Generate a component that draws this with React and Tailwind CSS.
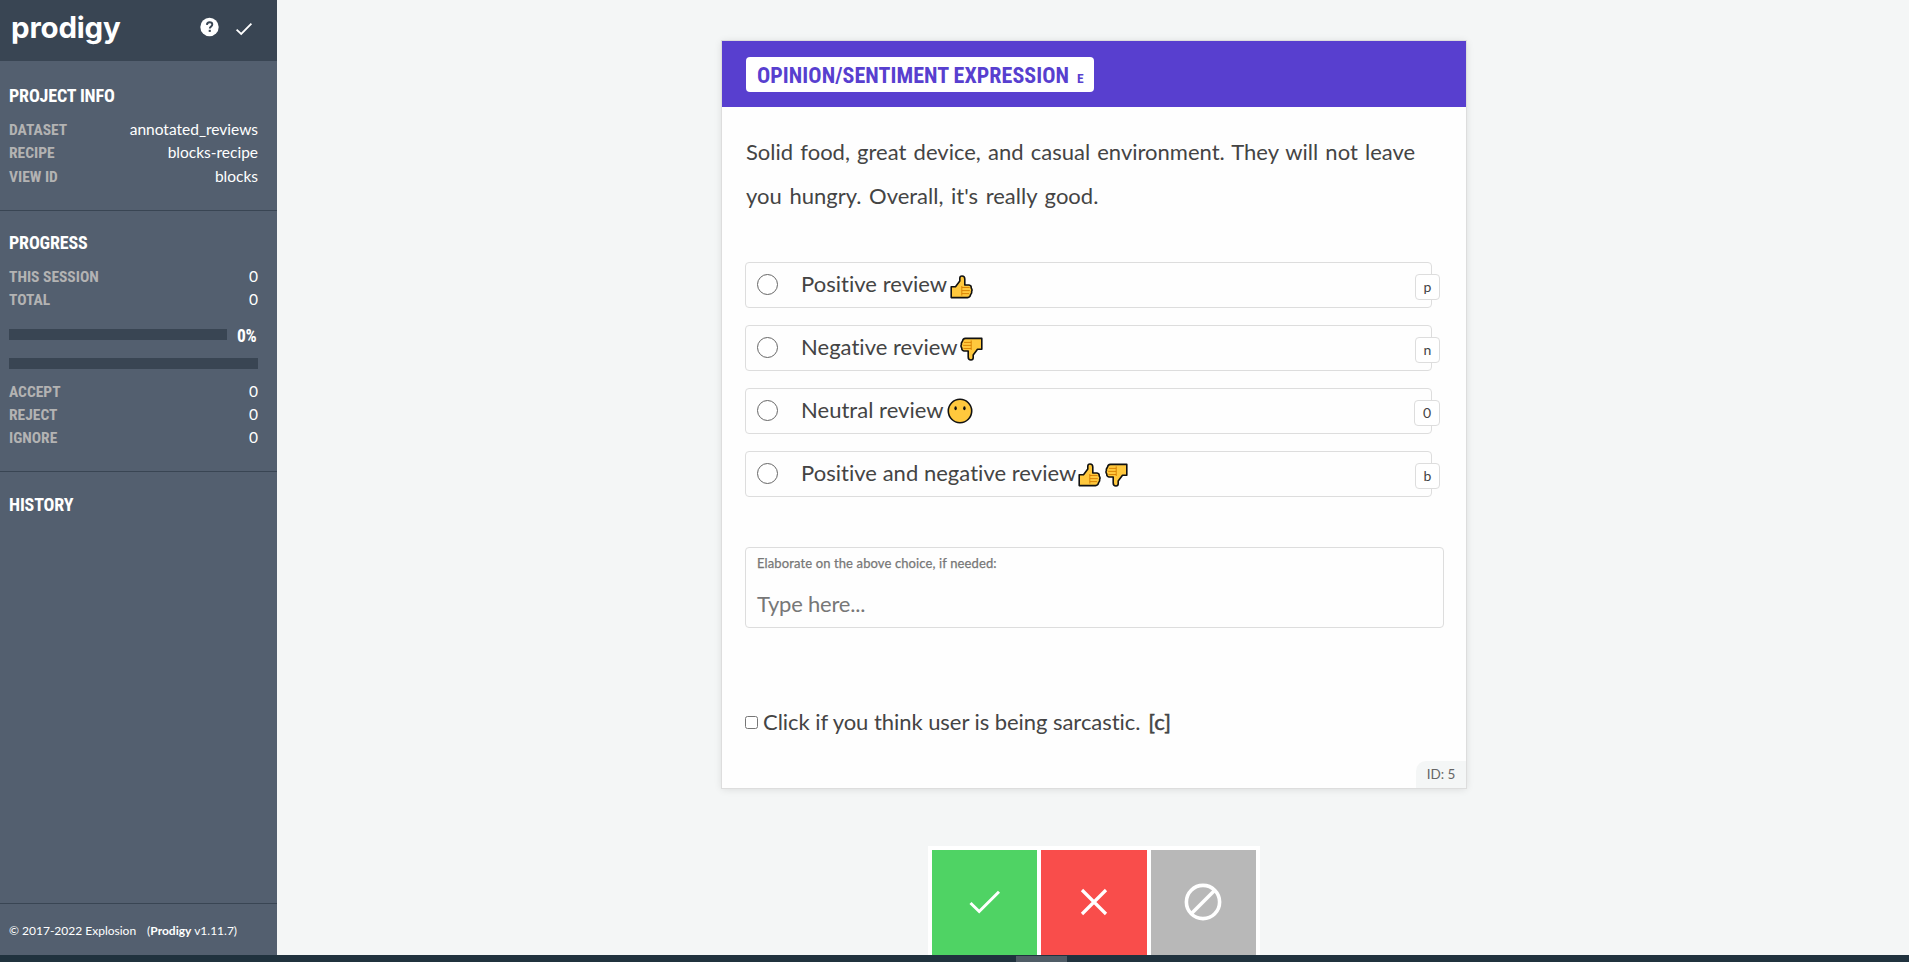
import React from 'react';

const COND = 'font-[Roboto,sans-serif] font-bold [font-stretch:75%]';

function Heading({ children }) {
  return <h2 className={`${COND} text-[18px] leading-[20px] tracking-[-0.15px] text-white`}>{children}</h2>;
}

function Row({ label, value }) {
  return (
    <div className="flex h-[23px] items-center justify-between">
      <span className={`${COND} pt-[2px] text-[15.5px] leading-[23px] text-[#b3b3b3]`}>{label}</span>
      <span className="text-[15.5px] leading-[23px] text-white">{value}</span>
    </div>
  );
}

function ThumbUp({ className = '' }) {
  return (
    <svg viewBox="0 0 23 24" className={`h-6 w-[23px] ${className}`}>
      <path d="M1.2 11.7H5.5L9.8 6V3.2Q9.8 1 12 1Q14.8 1 14.8 4V10H19Q21.5 10.5 21.2 13Q22.6 14.5 21.6 16.5Q22 18.5 20.6 19.5Q20.2 22.6 17.5 22.6H1.2Z" fill="#ffc83d" stroke="#111" strokeWidth="1.6" strokeLinejoin="round" />
      <path d="M11.8 11V20.6M11.8 12.5H19.6M11.8 15.6H19.8M11.8 18.6H19" fill="none" stroke="#d67d00" strokeWidth="0.9" />
    </svg>
  );
}

function ThumbDown({ className = '' }) {
  return <ThumbUp className={`rotate-180 ${className}`} />;
}

function Neutral() {
  return (
    <svg viewBox="0 0 26 26" className="ml-[3px] size-[26px]">
      <circle cx="13" cy="13" r="11.7" fill="#ffc83d" stroke="#111" strokeWidth="1.6" />
      <ellipse cx="8.6" cy="10.3" rx="1.2" ry="2" fill="#111" />
      <ellipse cx="17.4" cy="10.3" rx="1.2" ry="2" fill="#111" />
    </svg>
  );
}

function Option({ label, hotkey, wide, children }) {
  return (
    <div className="relative flex h-[46px] w-[687px] items-center rounded-[4px] border border-[#ddd] pb-px pl-[11px]">
      <span className="size-[21px] rounded-full border border-[#666] bg-white" />
      <span className="ml-[23px] flex items-center text-[22px] leading-[42px] text-[#444]">
        <span className="pb-px tracking-[0.03px]">{label}</span>
        {children}
      </span>
      <kbd className={`absolute -right-[9px] top-[11px] flex h-[26px] items-center justify-center rounded-[4px] border border-[#ddd] bg-white pb-[2px] font-[Lato,sans-serif] text-[14px] text-[#444] ${wide ? 'w-[26px]' : 'w-[25px]'}`}>
        {hotkey}
      </kbd>
    </div>
  );
}

function Sidebar() {
  return (
    <aside className="flex w-[277px] shrink-0 flex-col bg-[#535f6f]">
      <header className="flex h-[61px] items-start bg-[#394553]">
        <div className="ml-[11px] mt-[7px] w-[189px] font-[Inter,sans-serif] text-[29.5px] font-bold leading-[40px] tracking-[-0.2px] text-white">prodigy</div>
        <svg viewBox="0 0 20 20" className="mt-[17px] size-5">
          <circle cx="9.5" cy="10" r="9.2" fill="#fff" />
          <path d="M6.9 7.9Q7 5.3 9.6 5.3Q12.3 5.3 12.3 7.6Q12.3 8.7 11 9.6Q9.8 10.4 9.8 11.5" fill="none" stroke="#394553" strokeWidth="1.9" />
          <rect x="8.7" y="12.8" width="2.1" height="2.1" fill="#394553" />
        </svg>
        <svg viewBox="0 0 18 14" className="ml-[15px] mt-[22px] h-[14px] w-[18px]">
          <path d="M1.6 7.6L6.2 12L16.4 1.6" fill="none" stroke="#fff" strokeWidth="1.8" />
        </svg>
      </header>
      <section className="h-[150px] border-b border-[#394553] pl-[9px] pr-[19px] pt-[25px]">
        <Heading>PROJECT INFO</Heading>
        <div className="mt-[12px]">
          <Row label="DATASET" value="annotated_reviews" />
          <Row label="RECIPE" value="blocks-recipe" />
          <div className="h-px" />
          <Row label="VIEW ID" value="blocks" />
        </div>
      </section>
      <section className="h-[261px] border-b border-[#394553] pl-[9px] pr-[19px] pt-[22px]">
        <Heading>PROGRESS</Heading>
        <div className="mt-[12px]">
          <Row label="THIS SESSION" value="0" />
          <Row label="TOTAL" value="0" />
        </div>
        <div className="mt-[18px] flex h-[11px] items-center">
          <div className="h-[11px] w-[218px] bg-[#394553]" />
          <span className={`${COND} ml-[10px] mt-[2px] text-[17.5px] leading-[20px] tracking-[-0.3px] text-white`}>0%</span>
        </div>
        <div className="mt-[18px] h-[11px] bg-[#394553]" />
        <div className="mt-[11px]">
          <Row label="ACCEPT" value="0" />
          <Row label="REJECT" value="0" />
          <Row label="IGNORE" value="0" />
        </div>
      </section>
      <section className="grow pl-[9px] pt-[23px]">
        <Heading>HISTORY</Heading>
      </section>
      <footer className="flex h-[52px] items-center gap-[11px] border-t border-[#394553] pl-[9px] pt-[3px] text-[12px] text-white">
        <span>© 2017-2022 Explosion</span>
        <span>(<b>Prodigy</b> v1.11.7)</span>
      </footer>
    </aside>
  );
}

function Card() {
  return (
    <article className="flex h-[747px] w-[744px] flex-col bg-[#fefefe] shadow-[0_0_0_1px_#ddd,0_1px_8px_rgba(0,0,0,0.12)]">
      <header className="h-[66px] bg-[#583fcf] pl-6 pt-4">
        <div className={`${COND} flex h-[35px] w-[348px] items-baseline rounded-[4px] bg-white pl-[11px] text-[#583fcf]`}>
          <span className="text-[22px] leading-[37px] tracking-[0.04px]">OPINION/SENTIMENT EXPRESSION</span>
          <span className="ml-[8px] text-[13.5px]">E</span>
        </div>
      </header>
      <p className="mt-[23px] h-[88px] pl-6 text-[22px] leading-[44px] text-[#444]">
        <span className="[word-spacing:1.55px]">Solid food, great device, and casual environment. They will not leave</span>
        <br />
        <span className="[word-spacing:2px]">you hungry. Overall, it's really good.</span>
      </p>
      <div className="mt-[44px] flex flex-col gap-[17px] pl-[23px]">
        <Option label="Positive review" hotkey="p"><ThumbUp className="ml-[3px] mt-[4px]" /></Option>
        <Option label="Negative review" hotkey="n"><ThumbDown className="ml-[2px] mt-[2px]" /></Option>
        <Option label="Neutral review" hotkey="0" wide><Neutral /></Option>
        <Option label="Positive and negative review" hotkey="b">
          <ThumbUp className="ml-[2px] mt-[3px]" />
          <ThumbDown className="ml-[4px] mt-[2px]" />
        </Option>
      </div>
      <div className="ml-[23px] mt-[50px] h-[81px] w-[699px] rounded-[4px] border border-[#ddd] pl-[11px]">
        <div className="mt-[5px] text-[13px] leading-[20px] tracking-[0.12px] text-[#777] [-webkit-text-stroke:0.25px_#777]">Elaborate on the above choice, if needed:</div>
        <div className="mt-[9px] text-[22px] leading-[44px] tracking-[-0.2px] text-[#777]">Type here...</div>
      </div>
      <div className="ml-[23px] mt-[72px] flex h-[44px] items-center text-[22px] leading-[44px] text-[#444]">
        <span className="size-[13px] rounded-[2.5px] border border-[#767676] bg-white" />
        <span className="ml-[5px] tracking-[-0.05px]">Click if you think user is being sarcastic.</span>
        <span className="ml-[8px] [-webkit-text-stroke:0.5px_#444]">[c]</span>
      </div>
      <div className="ml-auto mt-auto flex h-[27px] w-[50px] items-center justify-center rounded-tl-[10px] bg-[#f4f6f6] text-[13.5px] text-[#666]">ID: 5</div>
    </article>
  );
}

function Actions() {
  return (
    <div className="mt-[58px] flex h-[109px] w-[332px] gap-1 bg-white pl-1 pt-1">
      <div className="flex w-[105px] items-center justify-center bg-[#4fd364] pb-[2px]">
        <svg viewBox="0 0 34 28" className="ml-[1px] h-7 w-[34px]">
          <path d="M2.5 15L11.2 23.5L31 3.7" fill="none" stroke="#fff" strokeWidth="3" />
        </svg>
      </div>
      <div className="flex w-[106px] items-center justify-center bg-[#f94d4b] pb-[2px]">
        <svg viewBox="0 0 28 28" className="size-7">
          <path d="M2 2L26 26M26 2L2 26" fill="none" stroke="#fff" strokeWidth="3.2" />
        </svg>
      </div>
      <div className="flex w-[105px] items-center justify-center bg-[#b8b8b8] pb-[2px] pr-px">
        <svg viewBox="0 0 38 38" className="size-[38px]">
          <circle cx="19" cy="19" r="16.6" fill="none" stroke="#fff" strokeWidth="3.6" />
          <path d="M7.5 30.5L30.5 7.5" stroke="#fff" strokeWidth="3.6" />
        </svg>
      </div>
    </div>
  );
}

export default function App() {
  return (
    <div className="flex h-[962px] w-[1909px] flex-col overflow-hidden font-[Lato,sans-serif] [font-variant-ligatures:none]">
      <div className="flex h-[955px]">
        <Sidebar />
        <main className="flex grow flex-col items-center bg-[#f4f6f6] pl-[2px] pt-[41px]">
          <Card />
          <Actions />
        </main>
      </div>
      <div className="h-[7px] bg-[#20323e] pl-[1016px] pt-px">
        <div className="h-[6px] w-[51px] bg-[#4f5c66]" />
      </div>
    </div>
  );
}
